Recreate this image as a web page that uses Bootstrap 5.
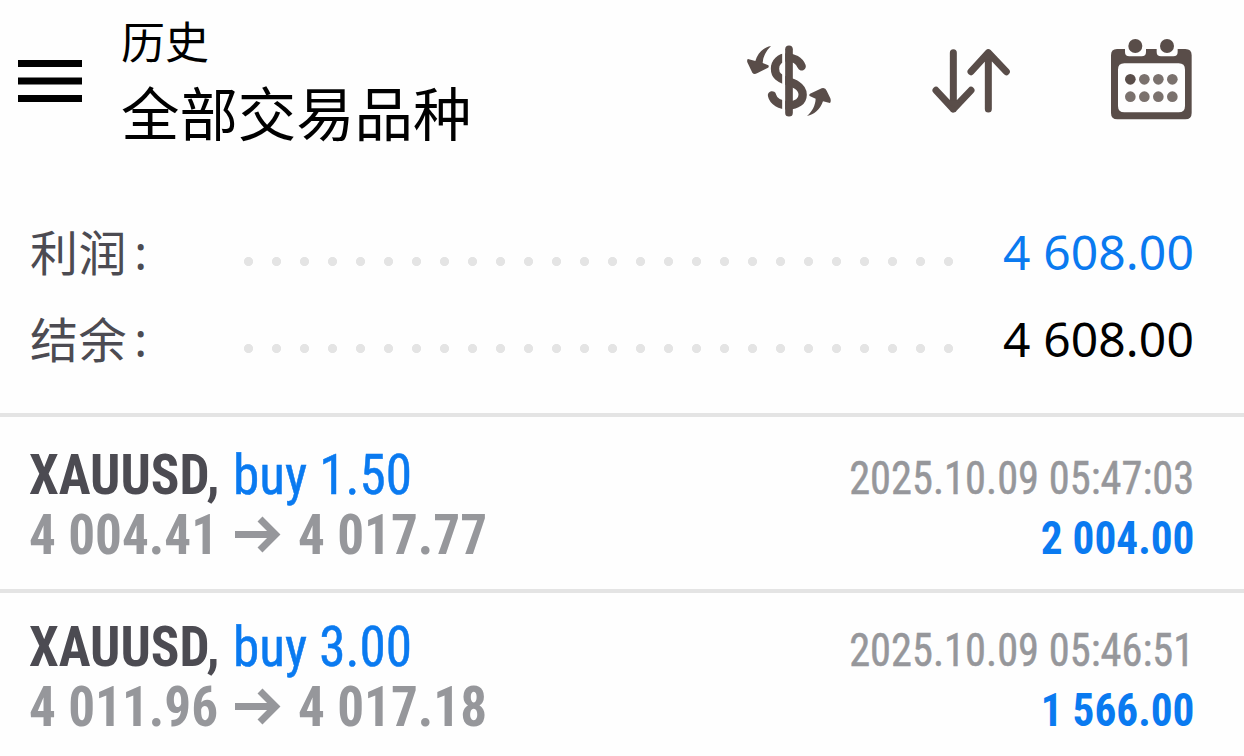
<!DOCTYPE html>
<html lang="zh-CN">
<head>
<meta charset="utf-8">
<meta name="viewport" content="width=device-width, initial-scale=1">
<title>历史</title>
<link href="https://cdn.jsdelivr.net/npm/bootstrap@5.3.0/dist/css/bootstrap.min.css" rel="stylesheet">
<style>
body{background:#fefefe;color:#000;font-family:"Noto Sans","Noto Sans CJK SC",sans-serif;width:1244px;height:756px;overflow:hidden}
.topbar{height:208px;padding:13px 39px 0 18px}
.menu-btn{margin-top:47px;width:64px;height:42px}
.menu-btn svg,.tool svg{display:block}
.titles{margin-left:39px;font-family:"Noto Sans CJK SC",sans-serif}
.screen-name{font-size:44px;line-height:54px;height:54px}
.symbol-name{font-size:58.4px;line-height:88px;height:88px}
.tools{margin-top:17px}
.tool{color:#594d49}
.tool-money{margin-right:70px}
.tool-sort{margin-right:65px}
.totals{height:205px}
.total-row{height:87px;padding:0 50px 0 30px;font-size:48px;line-height:87px}
.total-label{width:209px;color:#4c4b52}
.label-text{font-family:"Noto Sans CJK SC",sans-serif;letter-spacing:.6px;line-height:85px}
.label-colon{margin-left:7px}
.leader{width:720px;height:11px;margin-top:48px;background:radial-gradient(circle 5px at 9.5px 5.5px,#e4e4e4 4.2px,transparent 5px) 0 0/28px 11px repeat-x}
.total-value{letter-spacing:.12px}
.deal{border-top:4px solid #e4e4e4;height:176px;padding:24px 50px 0 29px;font-family:"Roboto Condensed","Roboto",sans-serif;font-stretch:75%;white-space:nowrap}
.deal-first{padding-top:28px}
.deal-line{height:60px;line-height:60px}
.deal-main{font-size:56px}
.deal-side{font-size:46px;padding-top:3px}
.sx-name{width:204px}
.squeeze{display:inline-block;transform:scaleX(.95);transform-origin:left}
.squeeze-end{display:inline-block;transform:scaleX(.94);transform-origin:right}
.squeeze-date{display:inline-block;transform:scaleX(.922);transform-origin:right}
.thick{-webkit-text-stroke:.5px currentColor}
.arrow{display:block;margin:11px 16px 0 2px}
.ink{color:#4c4b52}.blue{color:#0a7af0}.grey{color:#96979b}
</style>
</head>
<body>
<header class="topbar d-flex align-items-start">
  <div class="menu-btn"><svg width="64" height="42"><path d="M0 0h64v7H0zM0 17.5h64v7H0zM0 35h64v7H0z"/></svg></div>
  <div class="titles flex-grow-1"><div class="screen-name">历史</div><div class="symbol-name">全部交易品种</div></div>
  <div class="tools d-flex">
    <div class="tool tool-money"><svg width="120" height="100" viewBox="0 0 360 300"><g fill="none" stroke="currentColor"><path d="M215 109C208 92 190 82 170 82C150 82 135 97 135 116C135 138 150 145 165 151C190 159 218 168 218 194C218 214 200 226 176 226C150 226 130 214 126 196" stroke-width="25" stroke-linecap="round"/><path d="M161 45v215" stroke="#fefefe" stroke-width="9"/><path d="M177 58v190" stroke-width="23" stroke-linecap="round"/></g><path fill="currentColor" d="M123 48C103 51 83 67 76 93L54 87Q50 88 52 97L67 128Q72 135 81 130L114 113Q118 110 115 106L98 99C99 80 108 63 123 48ZM231 258C252 254 270 240 279 214L300 219Q304 214 301 205L290 182Q286 172 275 175L240 191Q236 195 239 198L257 206C256 226 247 244 231 258Z"/></svg></div>
    <div class="tool tool-sort"><svg width="110" height="100" viewBox="0 0 330 300" fill="none" stroke="currentColor" stroke-width="21" stroke-linecap="round" stroke-linejoin="round"><path d="M100 68V237M48 181l52 56 53-56M205 237V68M153 125l52-57 54 57"/><path d="M84 214h32l-16 18zM189 91h32l-16-18z" fill="currentColor" stroke-width="4"/></svg></div>
    <div class="tool"><svg width="110" height="100" viewBox="0 0 330 300"><path fill="currentColor" fill-rule="evenodd" d="M66 57H90V66Q90 79 103 79H140Q153 79 153 66V57H185V66Q185 79 198 79H235Q248 79 248 66V57H271Q290 57 290 76V249Q290 268 271 268H67Q48 268 48 249V76Q48 57 66 57ZM88 100Q69 100 69 119V228Q69 247 88 247H251Q270 247 270 228V119Q270 100 251 100Z"/><g fill="currentColor"><circle cx="121" cy="48" r="21"/><circle cx="216" cy="48" r="21"/><circle cx="106" cy="148" r="16"/></g><g fill="#7a716d"><circle cx="148" cy="148" r="16"/><circle cx="190" cy="148" r="16"/><circle cx="232" cy="148" r="16"/><circle cx="106" cy="200" r="16"/><circle cx="148" cy="200" r="16"/><circle cx="190" cy="200" r="16"/><circle cx="232" cy="200" r="16"/></g></svg></div>
  </div>
</header>
<section class="totals">
  <div class="total-row d-flex"><div class="total-label d-flex"><span class="label-text">利润</span><span class="label-colon">:</span></div><div class="leader"></div><div class="total-value ms-auto blue">4 608.00</div></div>
  <div class="total-row d-flex"><div class="total-label d-flex"><span class="label-text">结余</span><span class="label-colon">:</span></div><div class="leader"></div><div class="total-value ms-auto">4 608.00</div></div>
</section>
<main>
  <div class="deal deal-first d-flex justify-content-between">
    <div class="deal-main">
      <div class="deal-line d-flex"><div class="sx-name"><b class="squeeze ink">XAUUSD,</b></div><span class="squeeze thick blue">buy 1.50</span></div>
      <div class="deal-line d-flex grey"><div class="sx-name"><b class="squeeze">4 004.41</b></div><svg class="arrow" width="47" height="37" viewBox="0 0 47 37" fill="none" stroke="currentColor" stroke-width="7"><path d="M0 18.5H40M25 3l15.5 15.5L25 34"/></svg><b class="squeeze">4 017.77</b></div>
    </div>
    <div class="deal-side text-end"><div class="deal-line grey"><span class="squeeze-date thick">2025.10.09 05:47:03</span></div><div class="deal-line blue"><b class="squeeze-end">2 004.00</b></div></div>
  </div>
  <div class="deal d-flex justify-content-between">
    <div class="deal-main">
      <div class="deal-line d-flex"><div class="sx-name"><b class="squeeze ink">XAUUSD,</b></div><span class="squeeze thick blue">buy 3.00</span></div>
      <div class="deal-line d-flex grey"><div class="sx-name"><b class="squeeze">4 011.96</b></div><svg class="arrow" width="47" height="37" viewBox="0 0 47 37" fill="none" stroke="currentColor" stroke-width="7"><path d="M0 18.5H40M25 3l15.5 15.5L25 34"/></svg><b class="squeeze">4 017.18</b></div>
    </div>
    <div class="deal-side text-end"><div class="deal-line grey"><span class="squeeze-date thick">2025.10.09 05:46:51</span></div><div class="deal-line blue"><b class="squeeze-end">1 566.00</b></div></div>
  </div>
</main>
<script src="https://cdn.jsdelivr.net/npm/bootstrap@5.3.0/dist/js/bootstrap.bundle.min.js"></script>
</body>
</html>
